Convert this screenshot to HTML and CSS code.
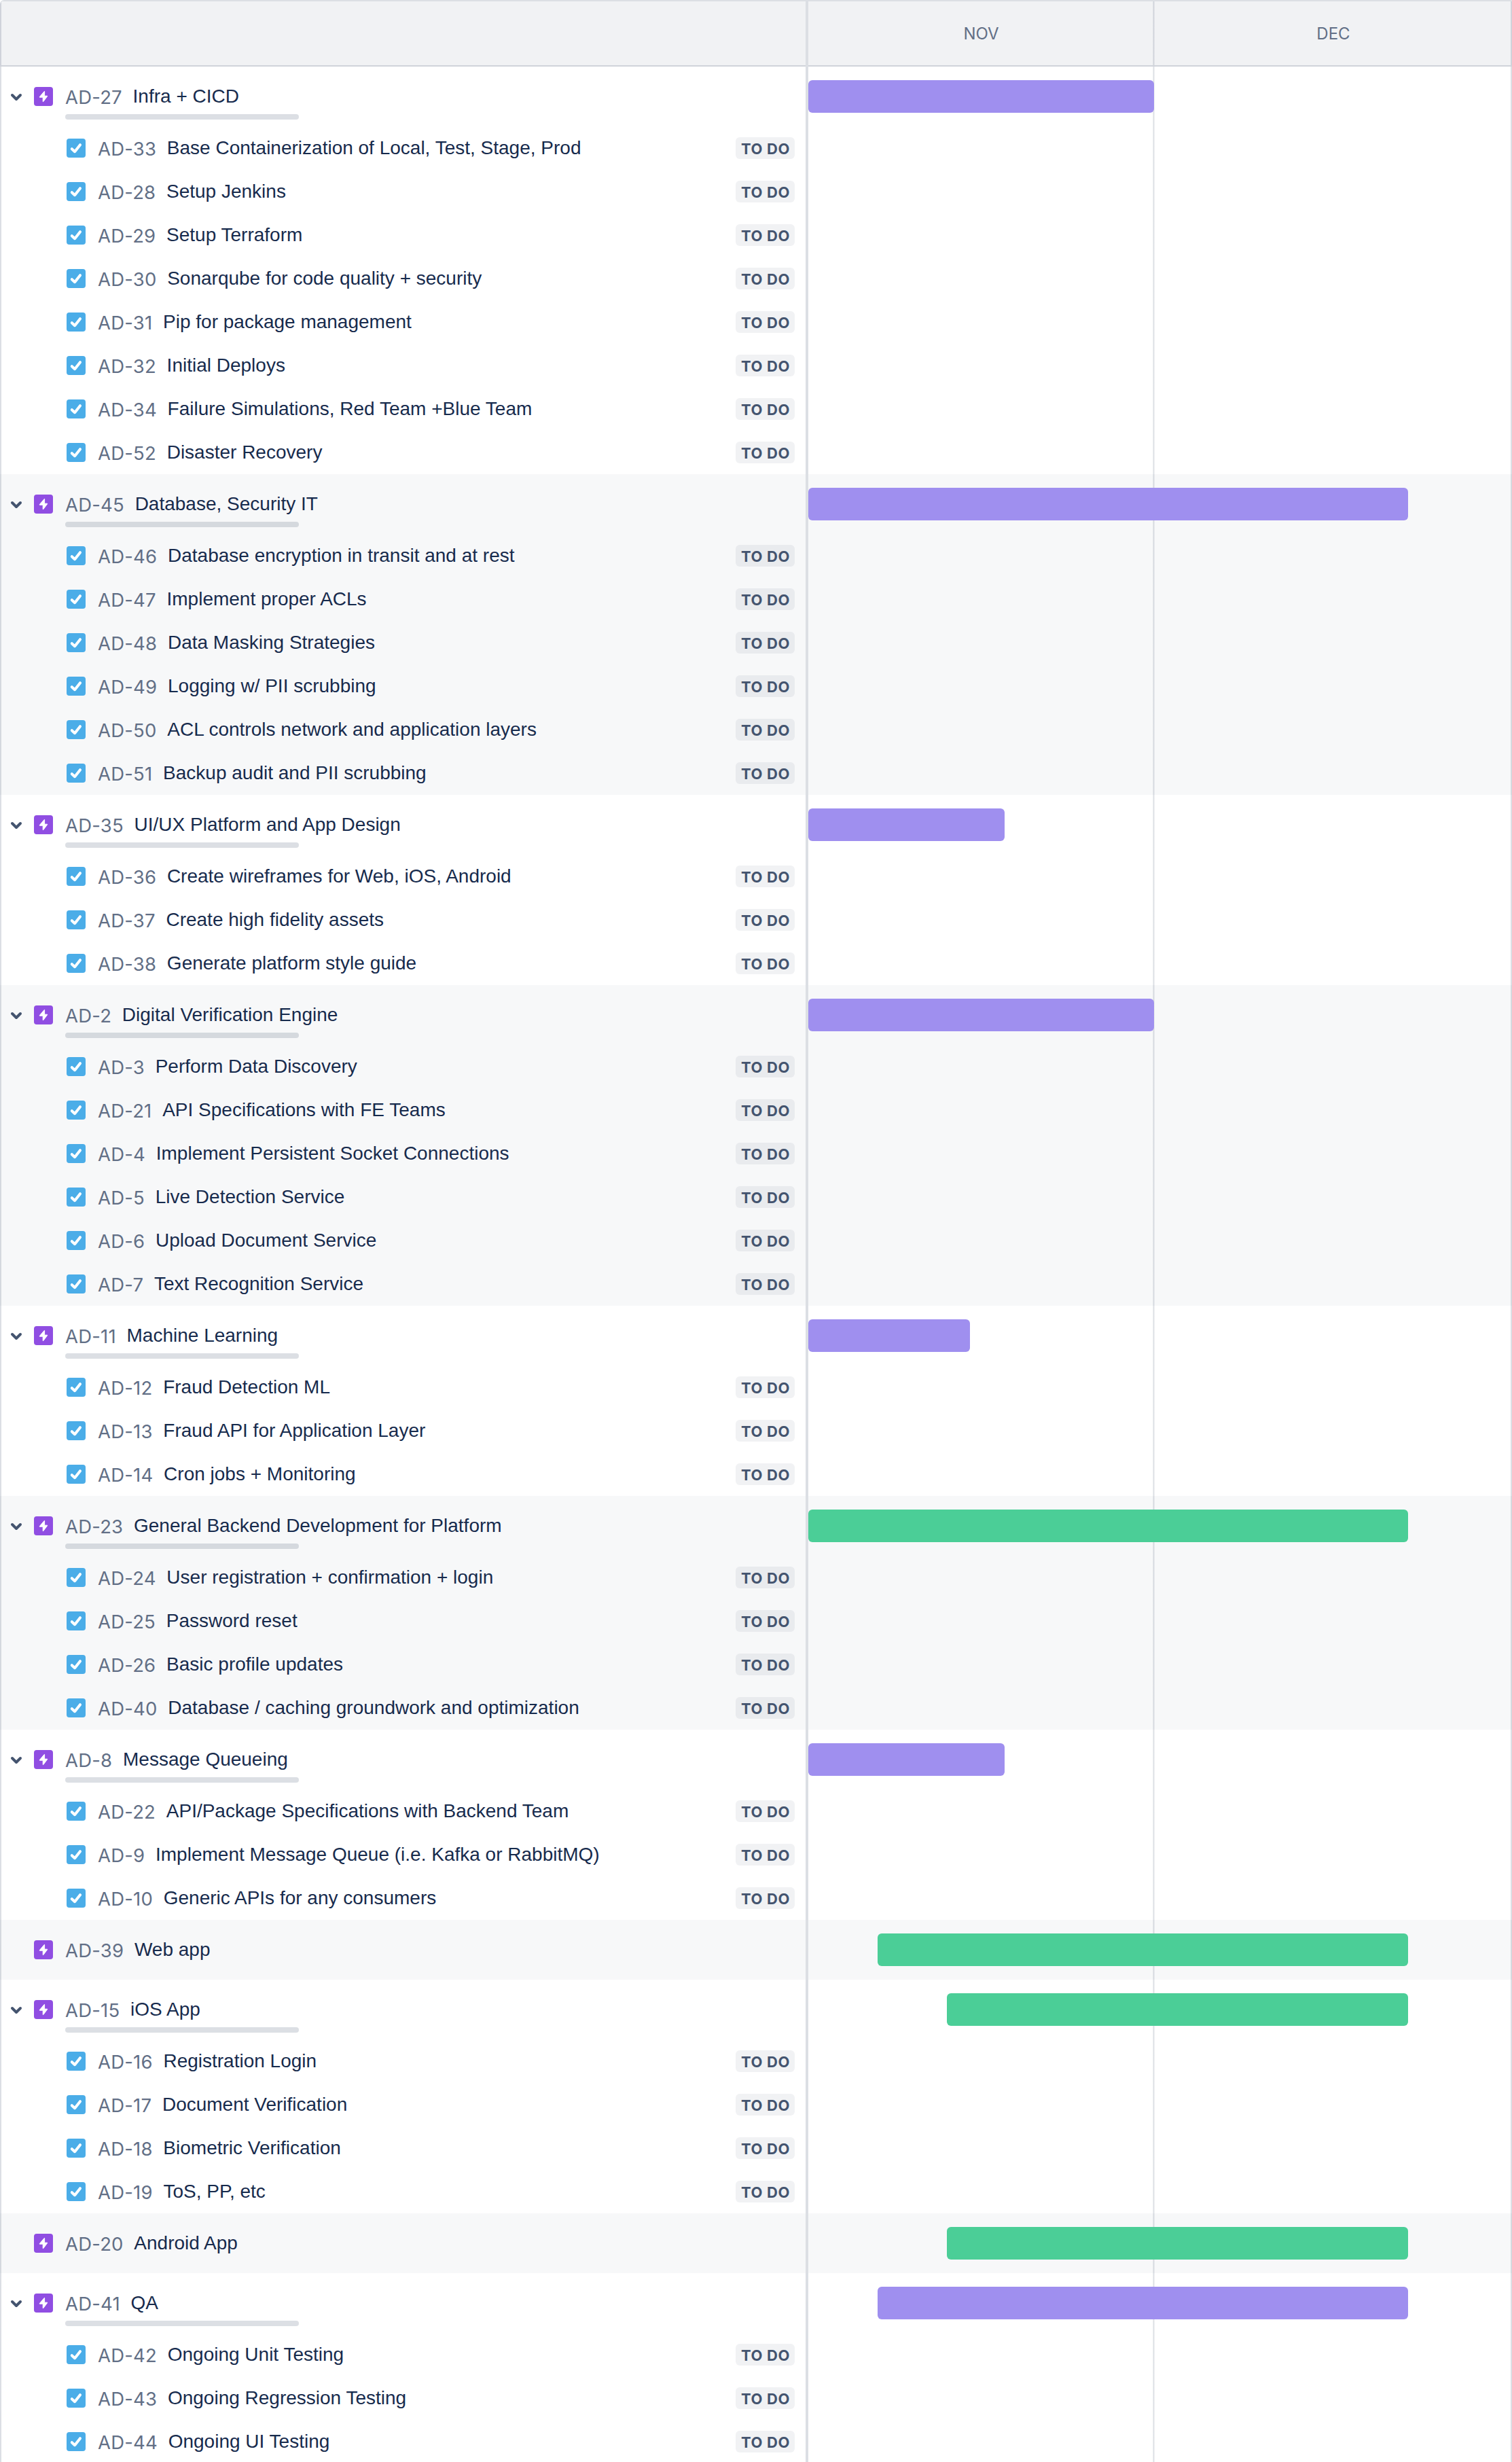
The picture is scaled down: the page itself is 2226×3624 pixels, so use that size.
FILE: index.html
```
<!DOCTYPE html>
<html lang="en">
<head>
<meta charset="utf-8">
<title>Roadmap</title>
<link rel="stylesheet" href="styles.css">
</head>
<body>
<svg class="sprite" aria-hidden="true">
  <symbol id="chevron" viewBox="0 0 18 12"><path d="M3 3l6 6 6-6" fill="none" stroke="#44546F" stroke-width="4" stroke-linecap="round" stroke-linejoin="round"/></symbol>
  <symbol id="epic" viewBox="0 0 28 28"><rect width="28" height="28" rx="4" fill="#904EE2"/><path d="M15.2 6.4L8.3 14.6V15.2H13.2V21.6H13.8L19.6 13.8V13.2H15.6V6.4z" fill="#fff" stroke="#fff" stroke-width="1" stroke-linejoin="round"/></symbol>
  <symbol id="task" viewBox="0 0 28 28"><rect width="28" height="28" rx="4" fill="#4BADE8"/><path d="M7.8 15.2l4.3 4L20 9.2" fill="none" stroke="#fff" stroke-width="4" stroke-linecap="round" stroke-linejoin="round"/></symbol>
</svg>
<main class="roadmap">
  <header class="head">
    <div class="head-list"></div>
    <div class="month month-nov">NOV</div>
    <div class="month month-dec">DEC</div>
  </header>

  <section class="group">
    <div class="list">
      <div class="epic"><svg class="chevron"><use href="#chevron"/></svg><svg class="icon"><use href="#epic"/></svg><div class="label"><span class="key">AD-27</span><span class="title">Infra + CICD</span><span class="progress"></span></div></div>
      <div class="task"><svg class="icon"><use href="#task"/></svg><span class="key">AD-33</span><span class="title">Base Containerization of Local, Test, Stage, Prod</span><span class="status">TO DO</span></div>
      <div class="task"><svg class="icon"><use href="#task"/></svg><span class="key">AD-28</span><span class="title">Setup Jenkins</span><span class="status">TO DO</span></div>
      <div class="task"><svg class="icon"><use href="#task"/></svg><span class="key">AD-29</span><span class="title">Setup Terraform</span><span class="status">TO DO</span></div>
      <div class="task"><svg class="icon"><use href="#task"/></svg><span class="key">AD-30</span><span class="title">Sonarqube for code quality + security</span><span class="status">TO DO</span></div>
      <div class="task"><svg class="icon"><use href="#task"/></svg><span class="key">AD-31</span><span class="title">Pip for package management</span><span class="status">TO DO</span></div>
      <div class="task"><svg class="icon"><use href="#task"/></svg><span class="key">AD-32</span><span class="title">Initial Deploys</span><span class="status">TO DO</span></div>
      <div class="task"><svg class="icon"><use href="#task"/></svg><span class="key">AD-34</span><span class="title">Failure Simulations, Red Team +Blue Team</span><span class="status">TO DO</span></div>
      <div class="task"><svg class="icon"><use href="#task"/></svg><span class="key">AD-52</span><span class="title">Disaster Recovery</span><span class="status">TO DO</span></div>
    </div>
    <div class="chart"><div class="bar purple" style="margin-left:0;width:509px"></div></div>
  </section>

  <section class="group">
    <div class="list">
      <div class="epic"><svg class="chevron"><use href="#chevron"/></svg><svg class="icon"><use href="#epic"/></svg><div class="label"><span class="key">AD-45</span><span class="title">Database, Security IT</span><span class="progress"></span></div></div>
      <div class="task"><svg class="icon"><use href="#task"/></svg><span class="key">AD-46</span><span class="title">Database encryption in transit and at rest</span><span class="status">TO DO</span></div>
      <div class="task"><svg class="icon"><use href="#task"/></svg><span class="key">AD-47</span><span class="title">Implement proper ACLs</span><span class="status">TO DO</span></div>
      <div class="task"><svg class="icon"><use href="#task"/></svg><span class="key">AD-48</span><span class="title">Data Masking Strategies</span><span class="status">TO DO</span></div>
      <div class="task"><svg class="icon"><use href="#task"/></svg><span class="key">AD-49</span><span class="title">Logging w/ PII scrubbing</span><span class="status">TO DO</span></div>
      <div class="task"><svg class="icon"><use href="#task"/></svg><span class="key">AD-50</span><span class="title">ACL controls network and application layers</span><span class="status">TO DO</span></div>
      <div class="task"><svg class="icon"><use href="#task"/></svg><span class="key">AD-51</span><span class="title">Backup audit and PII scrubbing</span><span class="status">TO DO</span></div>
    </div>
    <div class="chart"><div class="bar purple" style="margin-left:0;width:883px"></div></div>
  </section>

  <section class="group">
    <div class="list">
      <div class="epic"><svg class="chevron"><use href="#chevron"/></svg><svg class="icon"><use href="#epic"/></svg><div class="label"><span class="key">AD-35</span><span class="title">UI/UX Platform and App Design</span><span class="progress"></span></div></div>
      <div class="task"><svg class="icon"><use href="#task"/></svg><span class="key">AD-36</span><span class="title">Create wireframes for Web, iOS, Android</span><span class="status">TO DO</span></div>
      <div class="task"><svg class="icon"><use href="#task"/></svg><span class="key">AD-37</span><span class="title">Create high fidelity assets</span><span class="status">TO DO</span></div>
      <div class="task"><svg class="icon"><use href="#task"/></svg><span class="key">AD-38</span><span class="title">Generate platform style guide</span><span class="status">TO DO</span></div>
    </div>
    <div class="chart"><div class="bar purple" style="margin-left:0;width:289px"></div></div>
  </section>

  <section class="group">
    <div class="list">
      <div class="epic"><svg class="chevron"><use href="#chevron"/></svg><svg class="icon"><use href="#epic"/></svg><div class="label"><span class="key">AD-2</span><span class="title">Digital Verification Engine</span><span class="progress"></span></div></div>
      <div class="task"><svg class="icon"><use href="#task"/></svg><span class="key">AD-3</span><span class="title">Perform Data Discovery</span><span class="status">TO DO</span></div>
      <div class="task"><svg class="icon"><use href="#task"/></svg><span class="key">AD-21</span><span class="title">API Specifications with FE Teams</span><span class="status">TO DO</span></div>
      <div class="task"><svg class="icon"><use href="#task"/></svg><span class="key">AD-4</span><span class="title">Implement Persistent Socket Connections</span><span class="status">TO DO</span></div>
      <div class="task"><svg class="icon"><use href="#task"/></svg><span class="key">AD-5</span><span class="title">Live Detection Service</span><span class="status">TO DO</span></div>
      <div class="task"><svg class="icon"><use href="#task"/></svg><span class="key">AD-6</span><span class="title">Upload Document Service</span><span class="status">TO DO</span></div>
      <div class="task"><svg class="icon"><use href="#task"/></svg><span class="key">AD-7</span><span class="title">Text Recognition Service</span><span class="status">TO DO</span></div>
    </div>
    <div class="chart"><div class="bar purple" style="margin-left:0;width:509px"></div></div>
  </section>

  <section class="group">
    <div class="list">
      <div class="epic"><svg class="chevron"><use href="#chevron"/></svg><svg class="icon"><use href="#epic"/></svg><div class="label"><span class="key">AD-11</span><span class="title">Machine Learning</span><span class="progress"></span></div></div>
      <div class="task"><svg class="icon"><use href="#task"/></svg><span class="key">AD-12</span><span class="title">Fraud Detection ML</span><span class="status">TO DO</span></div>
      <div class="task"><svg class="icon"><use href="#task"/></svg><span class="key">AD-13</span><span class="title">Fraud API for Application Layer</span><span class="status">TO DO</span></div>
      <div class="task"><svg class="icon"><use href="#task"/></svg><span class="key">AD-14</span><span class="title">Cron jobs + Monitoring</span><span class="status">TO DO</span></div>
    </div>
    <div class="chart"><div class="bar purple" style="margin-left:0;width:238px"></div></div>
  </section>

  <section class="group">
    <div class="list">
      <div class="epic"><svg class="chevron"><use href="#chevron"/></svg><svg class="icon"><use href="#epic"/></svg><div class="label"><span class="key">AD-23</span><span class="title">General Backend Development for Platform</span><span class="progress"></span></div></div>
      <div class="task"><svg class="icon"><use href="#task"/></svg><span class="key">AD-24</span><span class="title">User registration + confirmation + login</span><span class="status">TO DO</span></div>
      <div class="task"><svg class="icon"><use href="#task"/></svg><span class="key">AD-25</span><span class="title">Password reset</span><span class="status">TO DO</span></div>
      <div class="task"><svg class="icon"><use href="#task"/></svg><span class="key">AD-26</span><span class="title">Basic profile updates</span><span class="status">TO DO</span></div>
      <div class="task"><svg class="icon"><use href="#task"/></svg><span class="key">AD-40</span><span class="title">Database / caching groundwork and optimization</span><span class="status">TO DO</span></div>
    </div>
    <div class="chart"><div class="bar green" style="margin-left:0;width:883px"></div></div>
  </section>

  <section class="group">
    <div class="list">
      <div class="epic"><svg class="chevron"><use href="#chevron"/></svg><svg class="icon"><use href="#epic"/></svg><div class="label"><span class="key">AD-8</span><span class="title">Message Queueing</span><span class="progress"></span></div></div>
      <div class="task"><svg class="icon"><use href="#task"/></svg><span class="key">AD-22</span><span class="title">API/Package Specifications with Backend Team</span><span class="status">TO DO</span></div>
      <div class="task"><svg class="icon"><use href="#task"/></svg><span class="key">AD-9</span><span class="title">Implement Message Queue (i.e. Kafka or RabbitMQ)</span><span class="status">TO DO</span></div>
      <div class="task"><svg class="icon"><use href="#task"/></svg><span class="key">AD-10</span><span class="title">Generic APIs for any consumers</span><span class="status">TO DO</span></div>
    </div>
    <div class="chart"><div class="bar purple" style="margin-left:0;width:289px"></div></div>
  </section>

  <section class="group">
    <div class="list">
      <div class="epic leaf"><svg class="icon"><use href="#epic"/></svg><div class="label"><span class="key">AD-39</span><span class="title">Web app</span></div></div>
    </div>
    <div class="chart"><div class="bar green" style="margin-left:102px;width:781px"></div></div>
  </section>

  <section class="group">
    <div class="list">
      <div class="epic"><svg class="chevron"><use href="#chevron"/></svg><svg class="icon"><use href="#epic"/></svg><div class="label"><span class="key">AD-15</span><span class="title">iOS App</span><span class="progress"></span></div></div>
      <div class="task"><svg class="icon"><use href="#task"/></svg><span class="key">AD-16</span><span class="title">Registration Login</span><span class="status">TO DO</span></div>
      <div class="task"><svg class="icon"><use href="#task"/></svg><span class="key">AD-17</span><span class="title">Document Verification</span><span class="status">TO DO</span></div>
      <div class="task"><svg class="icon"><use href="#task"/></svg><span class="key">AD-18</span><span class="title">Biometric Verification</span><span class="status">TO DO</span></div>
      <div class="task"><svg class="icon"><use href="#task"/></svg><span class="key">AD-19</span><span class="title">ToS, PP, etc</span><span class="status">TO DO</span></div>
    </div>
    <div class="chart"><div class="bar green" style="margin-left:204px;width:679px"></div></div>
  </section>

  <section class="group">
    <div class="list">
      <div class="epic leaf"><svg class="icon"><use href="#epic"/></svg><div class="label"><span class="key">AD-20</span><span class="title">Android App</span></div></div>
    </div>
    <div class="chart"><div class="bar green" style="margin-left:204px;width:679px"></div></div>
  </section>

  <section class="group">
    <div class="list">
      <div class="epic"><svg class="chevron"><use href="#chevron"/></svg><svg class="icon"><use href="#epic"/></svg><div class="label"><span class="key">AD-41</span><span class="title">QA</span><span class="progress"></span></div></div>
      <div class="task"><svg class="icon"><use href="#task"/></svg><span class="key">AD-42</span><span class="title">Ongoing Unit Testing</span><span class="status">TO DO</span></div>
      <div class="task"><svg class="icon"><use href="#task"/></svg><span class="key">AD-43</span><span class="title">Ongoing Regression Testing</span><span class="status">TO DO</span></div>
      <div class="task"><svg class="icon"><use href="#task"/></svg><span class="key">AD-44</span><span class="title">Ongoing UI Testing</span><span class="status">TO DO</span></div>
    </div>
    <div class="chart"><div class="bar purple" style="margin-left:102px;width:781px"></div></div>
  </section>
</main>
</body>
</html>
```
FILE: styles.css
```
:root {
  --line: rgba(9, 30, 66, 0.14);
  --line-soft: rgba(9, 30, 66, 0.07);
  --month-line: linear-gradient(to right,
    transparent 507px, var(--line-soft) 507px 508px,
    var(--line) 508px 509px,
    var(--line-soft) 509px 510px, transparent 510px);
}

* { box-sizing: border-box; }

body {
  margin: 0;
  background: #fff;
  font-family: "Liberation Sans", Arial, sans-serif;
}

.sprite { display: none; }

.roadmap {
  width: 2226px;
  height: 3624px;
  overflow: hidden;
  border-top: 2px solid #DCDFE4;
  border-top-left-radius: 6px;
}

.head {
  display: grid;
  grid-template-columns: 1188px 509px 1fr;
  height: 96px;
  background: #F1F2F4;
  border: 0 solid var(--line);
  border-width: 0 2px 2px;
}

.head-list { border-right: 4px solid #DCDFE4; margin-bottom: -2px; }

.month {
  display: flex;
  align-items: center;
  justify-content: center;
  padding-top: 2px;
  font: 24px/32px Inter, sans-serif;
  color: #626F86;
}

.month-nov {
  background: linear-gradient(to left, var(--line) 1px, var(--line-soft) 1px 2px, transparent 2px);
}

.month-dec {
  padding-left: 3px;
  background: linear-gradient(to right, var(--line-soft) 1px, transparent 1px);
}

.group {
  display: grid;
  grid-template-columns: 1188px 1fr;
  border: 0 solid var(--line);
  border-width: 0 2px;
  background: #fff;
}

.group:nth-of-type(even) { background: #F7F8F9; }

.list { border-right: 4px solid #DCDFE4; }

.chart { background: var(--month-line); padding-top: 20px; }

.bar { height: 48px; border-radius: 6px; }
.purple { background: #9F8FEF; }
.green { background: #4BCE97; }

.epic {
  display: flex;
  align-items: center;
  height: 88px;
  padding-left: 13px;
}

.epic.leaf { padding-left: 48px; }

.chevron { width: 18px; height: 12px; margin: 2px 17px 0 0; flex: none; }
.icon { width: 28px; height: 28px; flex: none; }

.label {
  display: grid;
  grid-template: 20px 48px 10px 10px / max-content max-content;
  align-items: center;
  margin-left: 18px;
}

.label .key, .label .title { grid-row: 2; }

.progress {
  grid-row: 3;
  grid-column: 1 / span 2;
  width: 344px;
  margin-right: -344px;
  height: 8px;
  margin-top: 2px;
  border-radius: 4px;
  background: var(--line);
}

.task {
  display: flex;
  align-items: center;
  height: 64px;
  padding: 0 16px 0 96px;
}

.key {
  margin-top: 2px;
  font: 27.5px/32px Inter, sans-serif;
  letter-spacing: 0.2px;
  color: #626F86;
}

.task .key { margin-left: 18px; }

.title {
  margin-left: 15.7px;
  font-size: 28px;
  line-height: 32px;
  white-space: nowrap;
  color: #172B4D;
}

.status {
  width: 87px;
  height: 32px;
  margin-left: auto;
  padding: 1px 0 0 8px;
  border-radius: 6px;
  background: rgba(9, 30, 66, 0.06);
  font: bold 22px/32px Inter, sans-serif;
  letter-spacing: 0.6px;
  white-space: nowrap;
  color: #44546F;
}
```
